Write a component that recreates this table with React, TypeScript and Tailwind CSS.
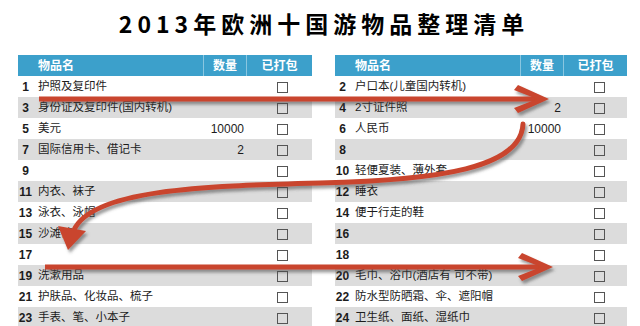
import React from 'react';

type Row = { n: number; name?: string; qty?: string };

const leftRows: Row[] = [
  { n: 1, name: '护照及复印件' },
  { n: 3, name: '身份证及复印件(国内转机)' },
  { n: 5, name: '美元', qty: '10000' },
  { n: 7, name: '国际信用卡、借记卡', qty: '2' },
  { n: 9 },
  { n: 11, name: '内衣、袜子' },
  { n: 13, name: '泳衣、泳帽' },
  { n: 15, name: '沙滩裤' },
  { n: 17 },
  { n: 19, name: '洗漱用品' },
  { n: 21, name: '护肤品、化妆品、梳子' },
  { n: 23, name: '手表、笔、小本子' },
];

const rightRows: Row[] = [
  { n: 2, name: '户口本(儿童国内转机)' },
  { n: 4, name: '2寸证件照', qty: '2' },
  { n: 6, name: '人民币', qty: '10000' },
  { n: 8 },
  { n: 10, name: '轻便夏装、薄外套' },
  { n: 12, name: '睡衣' },
  { n: 14, name: '便于行走的鞋' },
  { n: 16 },
  { n: 18 },
  { n: 20, name: '毛巾、浴巾(酒店有 可不带)' },
  { n: 22, name: '防水型防晒霜、伞、遮阳帽' },
  { n: 24, name: '卫生纸、面纸、湿纸巾' },
];

function PackTable({ rows, className }: { rows: Row[]; className: string }) {
  return (
    <div className={className}>
      {/* 表头 */}
      <div className="flex h-[21px] items-center bg-[#3ca0cb] text-[12px] font-bold text-white">
        <div className="w-[185px] pl-[20px]">物品名</div>
        <div className="flex h-full w-[43px] items-center justify-center border-l border-white/40">数量</div>
        <div className="flex h-full flex-1 items-center justify-center border-l border-white/40">已打包</div>
      </div>

      {rows.map((r, i) => (
        <div
          key={r.n}
          className={`flex h-[21px] items-center text-[#1c1c1c] ${i % 2 === 1 ? 'bg-[#dcdcdc]' : 'bg-white'}`}
        >
          <div className="w-[15px] text-center text-[12px] font-bold">{r.n}</div>
          <div className="w-[170px] whitespace-nowrap pl-[5px] text-[11.5px]">{r.name}</div>
          <div className="w-[43px] pr-[2px] text-right text-[12px]">{r.qty}</div>
          <div className="flex flex-1 items-center pl-[31px] pt-[2px]">
            <span className="block h-[11px] w-[11px] border border-[#555]" />
          </div>
        </div>
      ))}
    </div>
  );
}

export default function App() {
  return (
    <div
      className="relative h-[326px] w-[640px] overflow-hidden bg-white"
      style={{ fontFamily: "'Liberation Sans', 'Noto Sans CJK SC', sans-serif" }}
    >
      <h1
        className="h-[55px] pl-[8px] pt-[9px] text-center text-[23px] font-bold leading-[28px] tracking-[5px] text-black"
        style={{ fontFamily: "'Noto Sans CJK SC', sans-serif" }}
      >
        2013年欧洲十国游物品整理清单
      </h1>

      <div className="flex gap-[23px] pl-[18px]">
        <PackTable rows={leftRows} className="w-[294px]" />
        <PackTable rows={rightRows} className="w-[292px]" />
      </div>

      {/* 箭头 */}
      <svg className="pointer-events-none absolute inset-0" width={640} height={326}>
        <defs>
          <filter id="sh" x="-10%" y="-20%" width="120%" height="150%">
            <feDropShadow dx="2" dy="3" stdDeviation="1.8" floodColor="#4a4a4a" floodOpacity="0.55" />
          </filter>
        </defs>
        <g filter="url(#sh)">
          <path d="M39 99H540" stroke="#c9452d" strokeWidth={5} fill="none" />
          <polygon points="518,85 549,99 518,113 514,108 537,99 514,90" fill="#c9452d" />

          <path
            d="M523 124C521 168 440 180 320 183C200 186 92 190 74 230"
            stroke="#c9452d"
            strokeWidth={5}
            strokeLinecap="round"
            fill="none"
          />
          <polygon points="58,226 86,231 68,250" fill="#c9452d" />

          <path d="M45 267H544" stroke="#c9452d" strokeWidth={5} fill="none" />
          <polygon points="522,253 553,267 522,281 518,276 541,267 518,258" fill="#c9452d" />
        </g>
      </svg>
    </div>
  );
}
